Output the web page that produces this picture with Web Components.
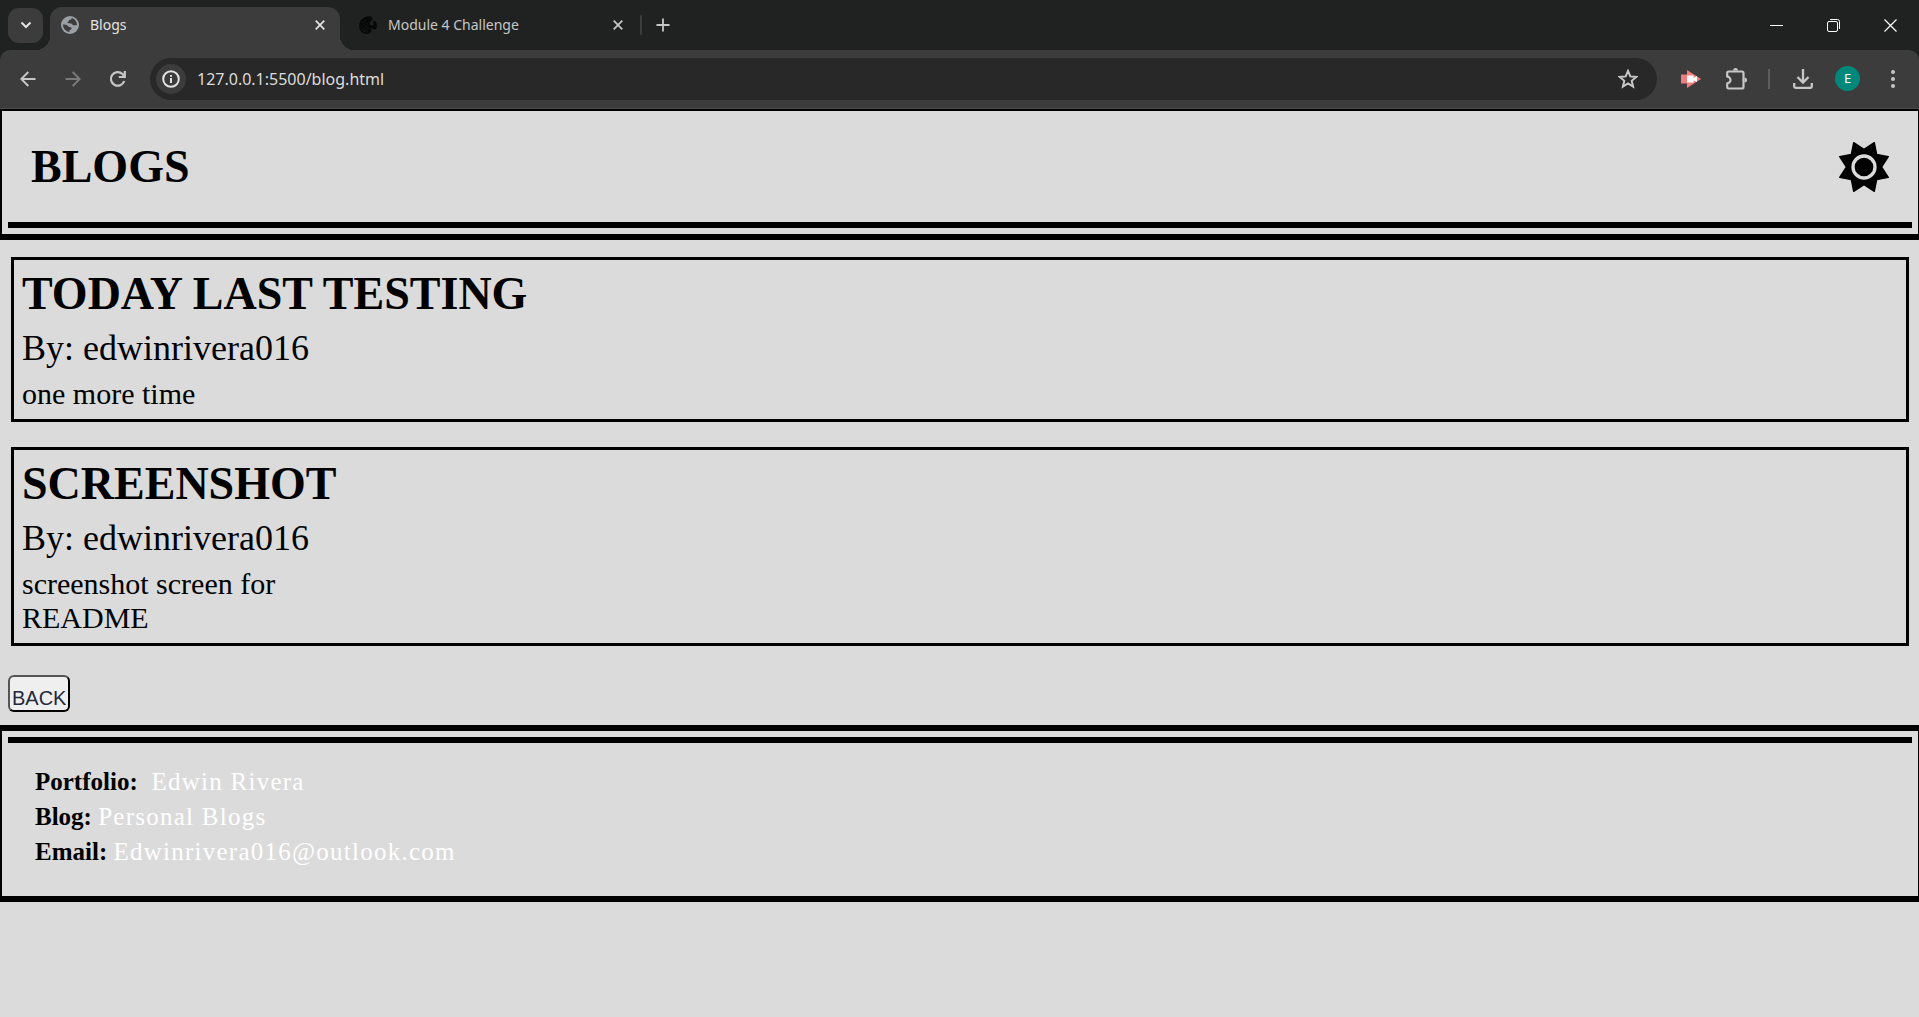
<!DOCTYPE html>
<html lang="en">
<head>
<meta charset="utf-8">
<title>Blogs</title>
<style>
  html, body { margin: 0; min-height: 100%; background: #dbdbdb; }
  body { font-family: "Liberation Serif", "Times New Roman", serif; color: #000; }
</style>
</head>
<body>
<browser-window>
  <browser-tab slot="tabs" active label="Blogs">
    <svg slot="icon" width="18" height="18" viewBox="0 0 18 18"><circle cx="9" cy="9" r="9" fill="#9aa0a6"/><path d="M10.8 2.1c-.2 1.7-1.300 1.800-2.600 1.900-.6 1.200-.3 1.600-1.500 2-.7.500.2 1.400 1.600 1.300 2.100-.1 2.900.8 3.400 1.700 1.300.6 2.300.3 4.300-.1-.2-3.400-2.100-5.800-5.200-6.800zM2 8.400c0 3.800 2.700 6.900 6.300 7.500.2-1 .1-1.900 1.300-2.300 1.300-.3 1.200-1.600.5-2.200-1-.4-1.900-.1-2.600-.9-1.100-1.200-1.900-2.100-5.500-2.100z" fill="#3c3c3c"/></svg>
  </browser-tab>
  <browser-tab slot="tabs" label="Module 4 Challenge">
    <svg slot="icon" width="18" height="18" viewBox="0 0 18 18"><path d="M10.500.2C3.800.4-.4 5.400.200 11c.6 4.100 4 7.200 7.700 6.900 2.900-.2 4.800-1.900 4.700-4.400-.1-1.300-1-2-1.900-2.700 2.200 1.600 4.200 3 5.400 2.700 1.500-.6 2-3.200 1.700-5.200-.3-2.100-1.300-3.600-2.600-3.900l-1.600 2.300c1 .3 1.400 1.400.7 2.300-1.300 1.200-3.400.3-3.400-1.800.1-1.900 1.800-2.300 2.500-3.700.6-1.500-.6-3.300-2.900-3.300z" fill="#060808"/><path d="M2 8.600c1.900 3.700 5 4.600 8.200 4.100M1.500 11.500c2 2.700 5 3.600 7.800 3.300M3.600 5.400c1 3.700 3.400 5 5.400 5.500M6.200 3c.2 3 1.300 4.700 3 5.600M3.500 14.600c1.700 1.200 3.400 1.500 5.200 1.500" fill="none" stroke="#202221" stroke-width=".6"/></svg>
  </browser-tab>

  <page-header heading="BLOGS"></page-header>
  <main-content>
    <blog-post>
      <span slot="title">TODAY LAST TESTING</span>
      <span slot="author">By: edwinrivera016</span>
      <span slot="content">one more time</span>
    </blog-post>
    <blog-post>
      <span slot="title">SCREENSHOT</span>
      <span slot="author">By: edwinrivera016</span>
      <span slot="content">screenshot screen for README</span>
    </blog-post>
    <back-button slot="actions">BACK</back-button>
  </main-content>
  <page-footer>
    <footer-link label="Portfolio:" href="#portfolio">&nbsp;Edwin Rivera</footer-link>
    <footer-link label="Blog:" href="#blog">Personal Blogs</footer-link>
    <footer-link label="Email:" href="mailto:Edwinrivera016@outlook.com">Edwinrivera016@outlook.com</footer-link>
  </page-footer>
</browser-window>

<script>
const define = (name, markup, setup) => {
  const template = document.createElement('template');
  template.innerHTML = markup;
  customElements.define(name, class extends HTMLElement {
    constructor() {
      super();
      this.attachShadow({ mode: 'open' }).append(template.content.cloneNode(true));
    }
    connectedCallback() { if (setup) setup(this, this.shadowRoot); }
  });
};

define('icon-button', `
  <style>
    :host { display: flex; flex: none; width: 35px; height: 35px; color: #c7c7c7; }
    button { flex: 1; display: grid; place-items: center; padding: 0; border: 0; border-radius: inherit; background: none; color: inherit; }
  </style>
  <button type="button"><slot></slot></button>`,
  (el, root) => root.querySelector('button').setAttribute('aria-label', el.getAttribute('label')));

define('browser-tab', `
  <style>
    :host { display: flex; align-items: center; box-sizing: border-box; flex: none; position: relative;
      width: 290px; height: 43px; padding: 0 8px 7px 11px; gap: 11px; border-radius: 12px 12px 0 0; color: #c7c7c7;
      font: 14px/20px "Noto Sans", "Open Sans", sans-serif; }
    :host([active]) { background: #3c3c3c; color: #e3e3e3; margin-right: 8px; }
    :host([active])::before, :host([active])::after { content: ""; position: absolute; bottom: 0; width: 14px; height: 14px; }
    :host([active])::before { right: 100%; background: radial-gradient(circle at 0 0, transparent 14px, #3c3c3c 14px); }
    :host([active])::after { left: 100%; background: radial-gradient(circle at 100% 0, transparent 14px, #3c3c3c 14px); }
    .label { flex: 1; white-space: nowrap; overflow: hidden; }
    icon-button { width: 24px; height: 24px; color: inherit; }
    ::slotted(svg) { display: block; }
  </style>
  <slot name="icon"></slot><span class="label"></span>
  <icon-button label="Close tab"><svg width="10" height="10" viewBox="0 0 10 10"><path d="M.7.7l8.600 8.600M9.300.7L.7 9.300" stroke="currentColor" stroke-width="1.700"/></svg></icon-button>`,
  (el, root) => { root.querySelector('.label').textContent = el.getAttribute('label'); });

define('address-bar', `
  <style>
    :host { display: flex; align-items: center; flex: 1; height: 42px; box-sizing: border-box; border-radius: 21px;
      background: #282828; padding: 0 12px 0 6px; margin: 0 6px 0 5px; gap: 11px; }
    .info { width: 30px; height: 30px; border-radius: 15px; background: #3c3c3c; color: #e3e3e3; }
    input { flex: 1; min-width: 0; padding: 0; border: 0; outline: 0; background: none; color: #dcdcdc;
      font: 16px/24px "Noto Sans", "Open Sans", sans-serif; }
  </style>
  <icon-button class="info" label="Site information"><svg width="18" height="18" viewBox="0 0 18 18" fill="none" stroke="currentColor" stroke-width="2"><circle cx="9" cy="9" r="7.800"/><path d="M9 8v5M9 4.900v1.900"/></svg></icon-button>
  <input type="text" aria-label="Address" value="127.0.0.1:5500/blog.html">
  <icon-button label="Bookmark this page"><svg width="20" height="20" viewBox="0 0 20 20"><path d="M10 1.900l2.300 5.500 5.900.5-4.500 3.900 1.400 5.800-5.100-3.100-5.100 3.100 1.400-5.800-4.500-3.900 5.900-.5z" fill="none" stroke="currentColor" stroke-width="2"/></svg></icon-button>`);

define('browser-toolbar', `
  <style>
    :host { display: flex; align-items: center; box-sizing: border-box; height: 59px; padding: 0 9px 1px 10px; gap: 10px;
      background: #3c3c3c; border-bottom: 1px solid #4a4a4a; border-radius: 10px 10px 0 0; }
    .off { color: #7a7a7a; }
    .rule { width: 2px; height: 20px; margin: 0 5px; background: #5e5e5e; }
    .avatar { display: grid; place-items: center; width: 25px; height: 25px; border-radius: 50%; background: #00897b;
      color: #fff; font: 13px/25px "Noto Sans", "Open Sans", sans-serif; }
  </style>
  <icon-button label="Back"><svg width="16" height="16" viewBox="0 0 16 16" fill="none" stroke="currentColor" stroke-width="2"><path d="M15.500 8H1.500M8.300 1L1.300 8l7 7"/></svg></icon-button>
  <icon-button class="off" label="Forward"><svg width="16" height="16" viewBox="0 0 16 16" fill="none" stroke="currentColor" stroke-width="2"><path d="M.5 8h14M7.700 1l7 7-7 7"/></svg></icon-button>
  <icon-button label="Reload"><svg width="18" height="18" viewBox="0 0 18 18" fill="none" stroke="currentColor" stroke-width="2.200"><path d="M15.200 11A6.800 6.800 0 1 1 13.500 4L15.500 6.200M15.800 1v6H9.800"/></svg></icon-button>
  <address-bar></address-bar>
  <icon-button label="Screen recorder"><svg width="20" height="18" viewBox="0 0 20 18"><path d="M0 4.500h6V0l14 9-14 9v-4.500H0z" fill="#f47c7c"/><path d="M6 5.500h6.500v2.500L16 6v6l-3.500-1.500V12.500H6z" fill="#fff"/></svg></icon-button>
  <icon-button label="Extensions"><svg width="22" height="22" viewBox="0 0 22 22"><path d="M8 2.500a2.500 2.500 0 0 1 5 0zM19.500 9.500a2.500 2.500 0 0 1 0 5z" fill="currentColor"/><path d="M3.500 3.500h13.500q1.500 0 1.500 1.500v14q0 1.500-1.500 1.500H3.500q-1.300 0-1.300-1.500v-3.700a3.300 3.300 0 0 0 0-6.600V5q0-1.500 1.300-1.500z" fill="none" stroke="currentColor" stroke-width="2.200" stroke-linejoin="round"/></svg></icon-button>
  <div class="rule"></div>
  <icon-button label="Downloads"><svg width="20" height="20" viewBox="0 0 20 20" fill="none" stroke="currentColor" stroke-width="2.300"><path d="M10 0v13M4.500 8l5.500 5.500L15.500 8M1.200 14v3.500q0 1.300 1.300 1.300h15q1.300 0 1.300-1.300V14"/></svg></icon-button>
  <icon-button label="Profile"><span class="avatar">E</span></icon-button>
  <icon-button label="Menu"><svg width="4" height="18" viewBox="0 0 4 18" fill="currentColor"><circle cx="2" cy="2" r="2"/><circle cx="2" cy="9" r="2"/><circle cx="2" cy="16" r="2"/></svg></icon-button>`);

define('browser-window', `
  <style>
    :host { display: flex; flex-direction: column; }
    .frame { background: #202221; }
    .strip { display: flex; align-items: end; height: 50px; box-sizing: border-box; padding-left: 8px; }
    .strip > icon-button { align-self: center; }
    .search { background: #3c3c3c; border-radius: 11px; color: #e3e3e3; margin-right: 7px; }
    .rule { width: 2px; height: 20px; align-self: center; background: #3c3c3c; margin-left: 2px; border-radius: 1px; }
    .window { margin-left: auto; display: flex; align-self: stretch; color: #fff; }
    .window icon-button { width: 57px; height: 50px; color: #fff; }
    .new { margin-left: 3px; }
    svg { display: block; }
  </style>
  <div class="frame">
    <div class="strip">
      <icon-button class="search" label="Search tabs"><svg width="12" height="8" viewBox="0 0 12 8"><path d="M1.500 1.500L6 6l4.500-4.500" fill="none" stroke="currentColor" stroke-width="2"/></svg></icon-button>
      <slot name="tabs"></slot>
      <div class="rule"></div>
      <icon-button class="new" label="New tab"><svg width="14" height="14" viewBox="0 0 14 14"><path d="M7 .5v13M.5 7h13" stroke="currentColor" stroke-width="1.800"/></svg></icon-button>
      <div class="window">
        <icon-button label="Minimize"><svg width="13" height="13" viewBox="0 0 13 13"><path d="M0 6.500h13" stroke="currentColor"/></svg></icon-button>
        <icon-button label="Restore"><svg width="13" height="13" viewBox="0 0 13 13" fill="none" stroke="currentColor"><rect x=".5" y="2.500" width="10" height="10" rx="1.500"/><path d="M3 .5h7.500a2 2 0 0 1 2 2V10"/></svg></icon-button>
        <icon-button label="Close"><svg width="13" height="13" viewBox="0 0 13 13"><path d="M.5.5l12 12M12.500.5l-12 12" stroke="currentColor" stroke-width="1.200"/></svg></icon-button>
      </div>
    </div>
    <browser-toolbar></browser-toolbar>
  </div>
  <slot></slot>`);

define('page-header', `
  <style>
    :host { display: block; border: solid #000; border-width: 2px 1px 6px 2px; padding: 0 6px 6px; }
    header { display: flex; align-items: center; justify-content: space-between; padding: 30px 23px 29px 23px; border-bottom: 6px solid #000; }
    h1 { margin: 0; font-size: 46px; line-height: 52px; font-weight: 700; }
    button { display: block; padding: 0; border: 0; background: none; color: #000; }
    svg { display: block; }
  </style>
  <header>
    <h1></h1>
    <button type="button" aria-label="Toggle theme"><svg width="50" height="50" viewBox="0 0 150 150">
      <path d="M44 2L75 22 106 2 113 37 148 44 128 75 148 106 113 113 106 148 75 128 44 148 37 113 2 106 22 75 2 44 37 37z" fill="#000" stroke="#000" stroke-width="4" stroke-linejoin="round"/>
      <circle cx="75" cy="75" r="33" stroke="#dbdbdb" stroke-width="10"/></svg></button>
  </header>`,
  (el, root) => { root.querySelector('h1').textContent = el.getAttribute('heading'); });

define('main-content', `
  <style>
    :host { display: block; padding: 17px 10px 13px 8px; }
    main { display: flex; flex-direction: column; gap: 25px; padding-left: 3px; }
    .actions { display: flex; padding-top: 29px; }
  </style>
  <main><slot></slot></main>
  <div class="actions"><slot name="actions"></slot></div>`);

define('blog-post', `
  <style>
    :host { display: block; }
    article { display: flex; flex-direction: column; gap: 8px; border: 3px solid #000; padding: 8px; }
    h2, h3, p { margin: 0; font-weight: 400; }
    h2 { font-size: 46px; line-height: 52px; font-weight: 700; }
    h3 { font-size: 36px; line-height: 41px; }
    p { font-size: 30px; line-height: 34px; max-width: 300px; }
  </style>
  <article>
    <h2><slot name="title"></slot></h2>
    <h3><slot name="author"></slot></h3>
    <p><slot name="content"></slot></p>
  </article>`);

define('back-button', `
  <style>
    :host { display: block; }
    button { display: block; padding: 10px 2px 0; border: 2px solid; border-color: #555 #000 #000 #555; border-radius: 6px;
      background: #efefef; color: #24293a; font: 20px/23px "Liberation Sans", Arial, sans-serif; }
  </style>
  <button type="button"><slot></slot></button>`);

define('page-footer', `
  <style>
    :host { display: block; border: solid #000; border-width: 6px 1px 6px 2px; padding: 6px 6px 0; }
    footer { display: flex; flex-direction: column; border-top: 6px solid #000; padding: 21px 27px 27px; }
  </style>
  <footer><slot></slot></footer>`);

define('footer-link', `
  <style>
    :host { display: block; font-size: 25px; line-height: 35px; }
    a { color: #fff; text-decoration: none; letter-spacing: 0.05em; }
  </style>
  <strong id="label"></strong> <a aria-describedby="label"><slot></slot></a>`,
  (el, root) => {
    root.querySelector('strong').textContent = el.getAttribute('label');
    root.querySelector('a').href = el.getAttribute('href');
  });
</script>
</body>
</html>
